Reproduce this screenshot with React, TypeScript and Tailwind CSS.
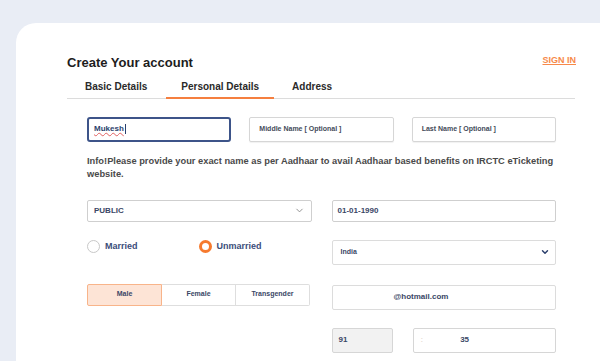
import { ChevronDown } from "lucide-react";

const font = { fontFamily: '"Liberation Sans", Arial, sans-serif' };

function TextBox({
  value,
  placeholder,
  className = "",
}: {
  value?: string;
  placeholder?: string;
  className?: string;
}) {
  return (
    <div
      className={`flex h-[25px] items-center rounded-[2px] border border-[#d6d6d6] bg-white px-[9px] text-[7px] font-bold shadow-[0_1px_1px_rgba(0,0,0,0.06)] ${className}`}
    >
      {value ? (
        <span className="text-[#2b3f6c]">{value}</span>
      ) : (
        <span className="text-[#444b5a]">{placeholder}</span>
      )}
    </div>
  );
}

export default function App() {
  return (
    <div className="h-[361px] overflow-hidden bg-[#e9edf5] pl-[16px] pt-[23px]" style={font}>
      <div className="h-[400px] rounded-tl-[20px] bg-white pl-[51px] pr-[24px] pt-[30px]">
        <div className="flex items-start justify-between">
          <h1 className="text-[13px] font-bold text-[#1d1d1d]">Create Your account</h1>
          <a className="mt-[1px] text-[9px] font-bold text-[#f7894a] underline underline-offset-1">
            SIGN IN
          </a>
        </div>

        <div className="mt-[3px] flex w-[508px] border-b border-[#dcdcdc] pl-[1px] text-[10px] font-bold leading-[12px] text-[#2a2a2a]">
          <div className="px-[17px] pb-[5px] pt-[5px]">Basic Details</div>
          <div className="mb-[-1px] ml-[2px] border-b-2 border-[#f57f3f] px-[15px] pb-[4px] pt-[5px]">
            Personal Details
          </div>
          <div className="ml-[2px] px-[16px] pb-[5px] pt-[5px]">Address</div>
        </div>

        <div className="ml-[20px] mt-[18px] w-[469px]">
          <div className="grid grid-cols-3 gap-[18px]">
            <div className="flex h-[25px] items-center rounded-[3px] border-2 border-[#3d5489] bg-white px-[5px] text-[8px] font-bold">
              <span className="text-[#2b3f6c] underline decoration-[#e06060] decoration-wavy">Mukesh</span>
              <span className="ml-[1px] h-[10px] w-px bg-[#2b3f6c]" />
            </div>
            <TextBox placeholder="Middle Name  [ Optional ]" />
            <TextBox placeholder="Last Name  [ Optional ]" />
          </div>

          <p className="mt-[13px] text-[9.3px] font-bold leading-[13px] text-[#4a4a4a]">
            Info!Please provide your exact name as per Aadhaar to avail Aadhaar based benefits on IRCTC eTicketing
            website.
          </p>

          <div className="mt-[19px] grid grid-cols-2 gap-x-[20px]">
            <div className="flex flex-col">
              <div className="flex h-[22px] items-center justify-between rounded-[2px] border border-[#cfcfcf] bg-white pl-[6px] pr-[6px] text-[8px] font-bold text-[#3a4766]">
                <span>PUBLIC</span>
                <ChevronDown size={11} strokeWidth={2} className="text-[#8a8a8a]" />
              </div>
              <div className="mt-[17px] flex h-[16px] items-center text-[9px] font-bold text-[#3b4d7a]">
                <span className="h-[13px] w-[13px] rounded-full border border-[#c8c8c8] bg-white" />
                <span className="ml-[5px]">Married</span>
                <span className="ml-[61px] h-[13px] w-[13px] rounded-full border-[3px] border-[#f67a2e] bg-white" />
                <span className="ml-[5px]">Unmarried</span>
              </div>
              <div className="mt-[29px] flex h-[22px] w-[223px] text-[7px] font-bold text-[#3a4766]">
                <div className="flex flex-1 items-center justify-center rounded-l-[2px] border border-[#f8b48a] bg-[#fde4d6]">
                  Male
                </div>
                <div className="flex flex-1 items-center justify-center border-y border-r border-[#dedede] bg-white">
                  Female
                </div>
                <div className="flex flex-1 items-center justify-center rounded-r-[2px] border-y border-r border-[#dedede] bg-white">
                  Transgender
                </div>
              </div>
            </div>

            <div className="flex flex-col">
              <div className="flex h-[22px] items-center rounded-[2px] border border-[#cfcfcf] bg-white px-[5px] text-[8px] font-bold text-[#3a4766]">
                01-01-1990
              </div>
              <div className="mt-[18px] flex h-[25px] items-center justify-between rounded-[2px] border border-[#dcdcdc] bg-white pl-[8px] pr-[5px] text-[7px] font-bold text-[#3a4766]">
                <span>India</span>
                <ChevronDown size={10} strokeWidth={3.5} className="text-[#2b3f6c]" />
              </div>
              <div className="mt-[20px] flex h-[25px] items-center rounded-[2px] border border-[#dcdcdc] bg-white pl-[61px] text-[8px] font-bold text-[#3a4766]">
                @hotmail.com
              </div>
              <div className="mt-[18px] flex gap-[20px]">
                <div className="flex h-[25px] w-[61px] items-center rounded-[2px] border border-[#d6d6d6] bg-[#f2f2f2] px-[6px] text-[8px] font-bold text-[#3a4766]">
                  91
                </div>
                <div className="flex h-[25px] flex-1 items-center rounded-[2px] border border-[#d6d6d6] bg-white pl-[7px] text-[8px] font-bold text-[#3a4766]">
                  <span className="text-[#e8e0d8]">:</span>
                  <span className="ml-[37px]">35</span>
                </div>
              </div>
            </div>
          </div>
        </div>
      </div>
    </div>
  );
}
